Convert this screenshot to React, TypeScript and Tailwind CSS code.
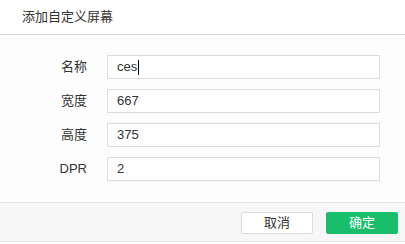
import React from "react";

const font = { fontFamily: '"Liberation Sans", "Noto Sans CJK SC", sans-serif' };

function Field({ label, value, caret }: { label: string; value: string; caret?: boolean }) {
  return (
    <div className="flex items-center h-[24px]">
      <div className="w-[88px] text-right text-[13px] text-[#333] pr-[1px]">{label}</div>
      <div className="ml-[19px] w-[273px] h-[24px] border border-[#dcdcdc] bg-white flex items-center pl-[9px] text-[13px] text-[#333]">
        <span>{value}</span>
        {caret && <span className="inline-block w-[1px] h-[15px] bg-black ml-[1px]" />}
      </div>
    </div>
  );
}

export default function App() {
  return (
    <div className="w-[405px] h-[244px] bg-white flex flex-col overflow-hidden" style={font}>
      <div className="h-[35px] shrink-0 flex items-center pl-[22px] text-[13px] text-[#333] border-b border-[#d9d9d9]">
        添加自定义屏幕
      </div>
      <div className="h-[167px] shrink-0 bg-[#fdfdfd] pt-[20px] flex flex-col gap-[10px]">
        <Field label="名称" value="ces" caret />
        <Field label="宽度" value="667" />
        <Field label="高度" value="375" />
        <Field label="DPR" value="2" />
      </div>
      <div className="h-[40px] shrink-0 bg-[#f7f7f7] border-t border-b border-[#e4e4e4] flex justify-end items-start pt-[9px] pr-[7px] gap-[13px]">
        <button className="w-[72px] h-[22px] bg-white border border-[#dcdcdc] rounded-[2px] text-[13px] text-[#333]">
          取消
        </button>
        <button className="w-[72px] h-[22px] bg-[#19be6b] rounded-[2px] text-[13px] text-white">
          确定
        </button>
      </div>
      <div className="flex-1 bg-white" />
    </div>
  );
}
